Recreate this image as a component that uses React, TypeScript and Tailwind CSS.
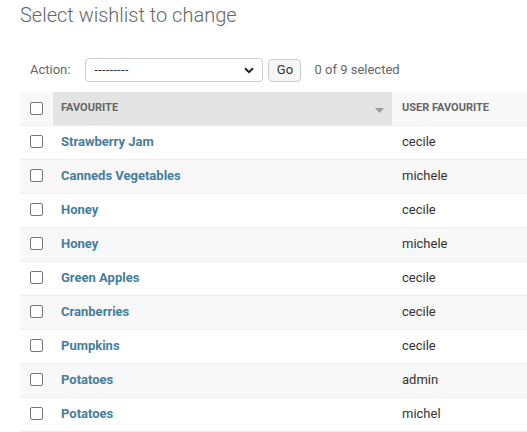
import React from "react";

const rows = [
  { fav: "Strawberry Jam", user: "cecile" },
  { fav: "Canneds Vegetables", user: "michele" },
  { fav: "Honey", user: "cecile" },
  { fav: "Honey", user: "michele" },
  { fav: "Green Apples", user: "cecile" },
  { fav: "Cranberries", user: "cecile" },
  { fav: "Pumpkins", user: "cecile" },
  { fav: "Potatoes", user: "admin" },
  { fav: "Potatoes", user: "michel" },
];

const Checkbox = () => (
  <span className="block w-[13px] h-[13px] rounded-[2px] border border-[#767676] bg-white" />
);

export default function App() {
  return (
    <div className="w-[527px] h-[432px] overflow-hidden bg-white text-[#333] font-['Roboto',sans-serif]">
      <h1 className="pl-5 pt-[3px] text-[20px] leading-6 font-light text-[#666]">
        Select wishlist to change
      </h1>

      <div className="mt-[31px] pl-[30px] flex items-center h-[24px] text-[13px]">
        <span className="text-[#666]">Action:</span>
        <div className="ml-[15px] w-[178px] h-[24px] rounded-[4px] border border-[#ccc] flex items-center justify-between pl-[8px] pr-[8px]">
          <span className="text-[12px] tracking-[0.5px] text-[#333]">---------</span>
          <svg width="10" height="7" viewBox="0 0 10 7">
            <path d="M1 1.2 L5 5.2 L9 1.2" fill="none" stroke="#222" strokeWidth="2" />
          </svg>
        </div>
        <button className="ml-[5px] h-[23px] w-[33px] rounded-[4px] border border-[#ccc] bg-[#f6f6f6] text-[13px] text-[#333]">
          Go
        </button>
        <span className="ml-[13px] text-[#666]">0 of 9 selected</span>
      </div>

      <div className="mt-[10px] ml-5 w-[560px]">
        <div className="flex h-[34px] border-b border-[#eee] text-[11px] font-bold uppercase text-[#666]">
          <div className="w-[33px] bg-[#f8f8f8] flex items-center pl-[10px]">
            <Checkbox />
          </div>
          <div className="w-[339px] bg-[#e4e4e4] flex items-center justify-between pl-[8px] pr-[8px]">
            <span>Favourite</span>
            <svg width="9" height="5" viewBox="0 0 9 5" className="mt-[4px]">
              <path d="M0 0 H9 L4.5 5 Z" fill="#9a9a9a" />
            </svg>
          </div>
          <div className="flex-1 bg-[#f8f8f8] flex items-center pl-[10px]">User favourite</div>
        </div>
        {rows.map((r, i) => (
          <div
            key={i}
            className={`flex h-[34px] pb-[2px] border-b border-[#eee] text-[13px] ${i % 2 === 1 ? "bg-[#f8f8f8]" : "bg-white"}`}
          >
            <div className="w-[33px] flex items-center pl-[10px]">
              <Checkbox />
            </div>
            <div className="w-[339px] flex items-center pl-[8px] font-bold text-[#447e9b]">{r.fav}</div>
            <div className="flex-1 flex items-center pl-[10px]">{r.user}</div>
          </div>
        ))}
      </div>
    </div>
  );
}
